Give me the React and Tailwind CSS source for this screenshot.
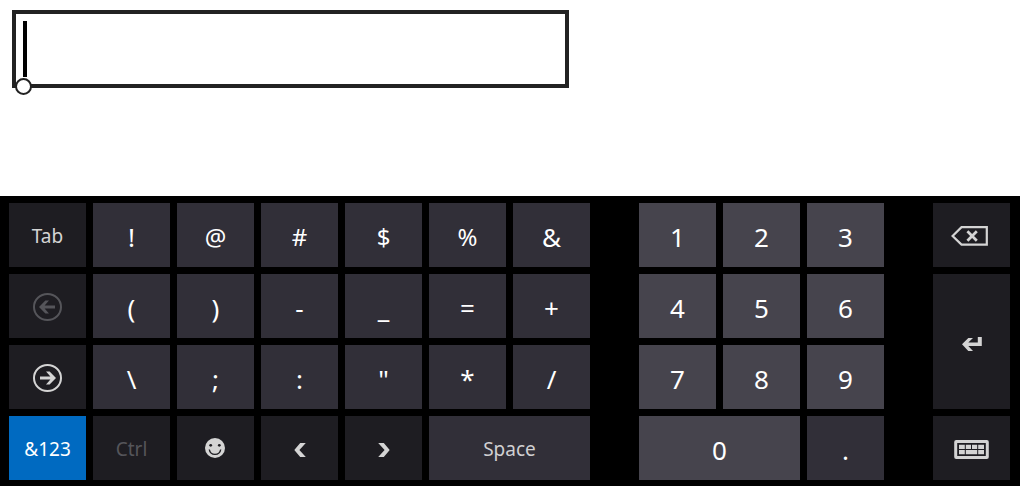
const tones = {
  dark: 'bg-[#1e1d22] text-[#d4d4d4]',
  off: 'bg-[#1e1d22] text-[#55555a]',
  mid: 'bg-[#312f38] text-white',
  soft: 'bg-[#312f38] text-[#d0d0d2]',
  digit: 'bg-[#46444d] text-white',
  active: 'bg-[#006ac1] text-white',
};

const sizes = {
  label: 'text-[19px] pt-0.5',
  small: 'text-[24px] pt-1',
  symbol: 'text-[26px] pt-1',
  digit: 'text-[26px] pt-1',
  icon: 'pt-0.5',
  lowIcon: 'pt-1',
};

function Key({ tone = 'mid', size = 'symbol', className = '', children, ...rest }) {
  return (
    <button
      type="button"
      className={`flex min-w-0 items-center justify-center leading-none ${tones[tone]} ${sizes[size]} ${className}`}
      {...rest}
    >
      {children}
    </button>
  );
}

function CircleArrow({ flip }) {
  return (
    <svg width="29" height="28" viewBox="0 0 29 28" fill="none" className={flip ? 'rotate-180' : ''} aria-hidden="true">
      <ellipse cx="14.5" cy="14" rx="13.5" ry="13" stroke="currentColor" strokeWidth="2" />
      <path d="M7 12.4H17.4L13 7.4H16.6L23 14L16.6 20.6H13L17.4 15.6H7Z" fill="currentColor" />
    </svg>
  );
}

function Smiley() {
  return (
    <svg width="21" height="20" viewBox="0 0 21 20" aria-hidden="true">
      <circle cx="10" cy="10" r="10" fill="currentColor" />
      <circle cx="5.7" cy="7.3" r="1.4" fill="#1e1d22" />
      <circle cx="14.3" cy="7.3" r="1.4" fill="#1e1d22" />
      <path d="M4.3 11.5C5.3 18 14.7 18 15.7 11.5" fill="none" stroke="#1e1d22" strokeWidth="1.4" />
    </svg>
  );
}

function Chevron({ flip }) {
  return (
    <svg width="12" height="14" viewBox="0 0 12 14" className={flip ? 'rotate-180' : ''} aria-hidden="true">
      <path d="M6.2 0H11.8L5.4 7L11.8 14H6.2L0.3 7Z" fill="currentColor" />
    </svg>
  );
}

function Backspace() {
  return (
    <svg width="41" height="20" viewBox="0 0 41 20" fill="none" stroke="currentColor" aria-hidden="true">
      <path d="M10.5 1.2H35.8V18.6H10.5L1.6 10Z" strokeWidth="2.2" />
      <path d="M16.4 5.2L25.8 14.8M25.8 5.2L16.4 14.8" strokeWidth="2.7" />
    </svg>
  );
}

function Enter() {
  return (
    <svg width="20" height="14" viewBox="0 0 20 14" aria-hidden="true">
      <path d="M15.8 0H19.8V9H6.3L11 14H6.3L0 7.3L6.3 1H11L6.3 5.6H15.8Z" fill="currentColor" />
    </svg>
  );
}

function KeyboardIcon() {
  return (
    <svg width="35" height="19" viewBox="0 0 35 19" aria-hidden="true">
      <rect x="1.7" y="1.5" width="31.6" height="16" rx="0.5" fill="none" stroke="currentColor" strokeWidth="3" />
      <path
        d="M5 4.8H10.8V8.9H5ZM11.8 4.8H17V8.9H11.8ZM18 4.8H23.2V8.9H18ZM24.2 4.8H30V8.9H24.2ZM5 10H10.8V14.2H5ZM11.8 10H23.2V14.2H11.8ZM24.2 10H30V14.2H24.2Z"
        fill="currentColor"
      />
    </svg>
  );
}

const Gap = () => <div aria-hidden="true" />;

export default function App() {
  return (
    <div className="flex min-h-screen flex-col bg-white font-['Noto_Sans','Open_Sans',sans-serif]">
      <main className="grow px-3 pt-[10px] pb-27">
        <div className="relative w-[557px] max-w-full">
          <input
            type="text"
            aria-label="Text"
            className="block h-[78px] w-full border-4 border-[#222222] bg-white pr-4 pl-5 text-[40px] text-black outline-none"
          />
          <span className="absolute top-[11px] left-[11px] h-14 w-1 bg-black" />
          <span className="absolute top-[68px] left-[3px] size-[17px] rounded-full border-2 border-[#222222] bg-white" />
        </div>
      </main>

      <section
        aria-label="Keyboard"
        className="grid auto-rows-[64px] grid-cols-[repeat(7,minmax(0,11fr))_minmax(0,5fr)_repeat(3,minmax(0,11fr))_minmax(0,5fr)_minmax(0,11fr)] gap-[7px] bg-black pt-[7px] pr-[10px] pb-[6px] pl-[9px]"
      >
        <Key tone="dark" size="label">Tab</Key>
        <Key>!</Key>
        <Key size="small">@</Key>
        <Key size="small">#</Key>
        <Key size="small">$</Key>
        <Key size="small">%</Key>
        <Key>&amp;</Key>
        <Gap />
        <Key tone="digit" size="digit">1</Key>
        <Key tone="digit" size="digit">2</Key>
        <Key tone="digit" size="digit">3</Key>
        <Gap />
        <Key tone="dark" size="icon" aria-label="Backspace"><Backspace /></Key>

        <Key tone="off" size="icon" aria-label="Previous page" disabled><CircleArrow flip /></Key>
        <Key>(</Key>
        <Key>)</Key>
        <Key>-</Key>
        <Key>_</Key>
        <Key>=</Key>
        <Key>+</Key>
        <Gap />
        <Key tone="digit" size="digit">4</Key>
        <Key tone="digit" size="digit">5</Key>
        <Key tone="digit" size="digit">6</Key>
        <Gap />
        <Key tone="dark" size="lowIcon" className="row-span-2" aria-label="Enter"><Enter /></Key>

        <Key tone="dark" size="icon" aria-label="Next page"><CircleArrow /></Key>
        <Key>\</Key>
        <Key>;</Key>
        <Key>:</Key>
        <Key>"</Key>
        <Key>*</Key>
        <Key>/</Key>
        <Gap />
        <Key tone="digit" size="digit">7</Key>
        <Key tone="digit" size="digit">8</Key>
        <Key tone="digit" size="digit">9</Key>
        <Gap />

        <Key tone="active" size="label" aria-pressed="true">&amp;123</Key>
        <Key tone="off" size="label" disabled>Ctrl</Key>
        <Key tone="dark" size="" aria-label="Emoji"><Smiley /></Key>
        <Key tone="dark" size="lowIcon" aria-label="Move left"><Chevron /></Key>
        <Key tone="dark" size="lowIcon" aria-label="Move right"><Chevron flip /></Key>
        <Key tone="soft" size="label" className="col-span-2">Space</Key>
        <Gap />
        <Key tone="digit" size="digit" className="col-span-2">0</Key>
        <Key>.</Key>
        <Gap />
        <Key tone="dark" size="icon" aria-label="Hide keyboard"><KeyboardIcon /></Key>
      </section>
    </div>
  );
}
